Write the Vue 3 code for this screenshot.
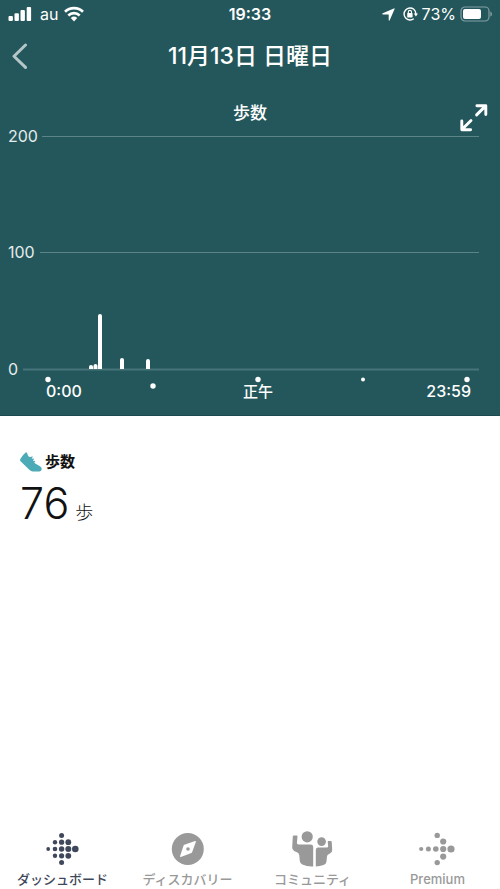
<script setup>
import { ref } from 'vue'

const gridLines = [
  { label: '200', y: 12, start: 42 },
  { label: '100', y: 128, start: 40 },
  { label: '0', y: 245, start: 23 }
]
const bars = [
  { x: 91, height: 4 },
  { x: 95.5, height: 5 },
  { x: 100, height: 55 },
  { x: 122, height: 11 },
  { x: 148, height: 10 }
]
const ticks = [
  { x: 48, y: 255.5, r: 2.7 },
  { x: 153, y: 262, r: 2.7 },
  { x: 258, y: 255.5, r: 2.7 },
  { x: 363, y: 255.5, r: 2 },
  { x: 467, y: 255.5, r: 2.7 }
]
const dashboardDots = [
  [2.2, 17, 1.9],
  [9, 10.2, 2.2], [9, 17, 2.3], [9, 23.8, 2.2],
  [15.6, 3.5, 2.5], [15.6, 10.2, 2.6], [15.6, 17, 2.7], [15.6, 23.8, 2.6], [15.6, 30.5, 2.5],
  [22.3, 10.2, 2.9], [22.3, 17, 3], [22.3, 23.8, 2.9],
  [29.3, 17, 3.3]
]
const premiumDots = [
  [4.2, 17, 2.1], [11.4, 17, 2.5], [18.8, 17, 2.8], [26.2, 17, 3.1], [34, 17, 3.6],
  [20.2, 3.4, 2.7], [26.2, 9.5, 3.1], [26.2, 24.6, 3.1], [20.2, 30.6, 2.7]
]
const tabs = [
  { id: 'dashboard', label: 'ダッシュボード' },
  { id: 'discover', label: 'ディスカバリー' },
  { id: 'community', label: 'コミュニティ' },
  { id: 'premium', label: 'Premium' }
]
const active = ref('dashboard')

const barPath = (b) => `M${b.x - 2} 245V${247 - b.height}a2 2 0 0 1 4 0V245Z`
</script>

<template>
  <div class="screen">
    <header class="top">
      <div class="status">
        <div class="status-side">
          <svg class="signal" width="24" height="16" viewBox="0 0 24 16" fill="#fff" aria-hidden="true">
            <rect x="0.5" y="10" width="4.4" height="5" rx="1" />
            <rect x="6.5" y="7.3" width="4.4" height="7.7" rx="1" />
            <rect x="12.5" y="4" width="4.4" height="11" rx="1" />
            <rect x="18.7" y="1" width="4.4" height="14" rx="1" />
          </svg>
          <span>au</span>
          <svg class="wifi" width="20" height="16" viewBox="0 0 20 16" fill="none" stroke="#fff" stroke-width="2.7" aria-hidden="true">
            <path d="M1 5.8A13 13 0 0 1 19 5.8" />
            <path d="M4.3 9.4A8.3 8.3 0 0 1 15.7 9.4" />
            <path d="M6.8 12A4.8 4.8 0 0 1 13.2 12L10 15.4Z" fill="#fff" stroke="none" />
          </svg>
        </div>
        <span class="clock">19:33</span>
        <div class="status-side end">
          <svg class="location" width="13" height="13" viewBox="0 0 13 13" fill="#fff" aria-hidden="true">
            <path d="M11.8.4Q12.9 0 12.6 1.1L7.7 12.3Q7 13.4 6.7 12V6.8Q6.7 6.4 6.3 6.4H1Q-.5 6.1.8 5.3Z" />
          </svg>
          <svg width="15" height="14" viewBox="0 0 15 14" fill="none" stroke="#fff" stroke-width="1.4" aria-hidden="true">
            <path d="M10.8 2.3A6 6 0 1 0 10.8 11.7M10.8 2.3Q12.8 4 12.9 7" />
            <path d="M10.8 6.6H15L12.9 9.6Z" fill="#fff" stroke="none" />
            <rect x="4.2" y="6.1" width="5.4" height="4.3" rx=".6" fill="#fff" stroke="none" />
            <path d="M5.3 6.6V5a1.6 1.6 0 0 1 3.2 0V6.6" stroke-width="1.1" />
          </svg>
          <span>73%</span>
          <svg width="32" height="16" viewBox="0 0 32 16" aria-hidden="true">
            <rect x="1" y="1" width="28" height="14" rx="4" fill="none" stroke="#84a0a3" stroke-width="1.2" />
            <rect x="3" y="3" width="18" height="10" rx="2" fill="#fff" />
            <path d="M30.4 5.4Q32 6 32 8T30.4 10.6Z" fill="#84a0a3" />
          </svg>
        </div>
      </div>

      <div class="title-row">
        <button class="back" type="button" aria-label="戻る">
          <svg width="16" height="28" viewBox="0 0 16 28" fill="none" stroke="#b4c6c8" stroke-width="3" stroke-linecap="round" stroke-linejoin="round">
            <path d="M13.5 3L2 14.2L13.5 25.4" />
          </svg>
        </button>
        <h1>11月13日 日曜日</h1>
      </div>

      <section class="chart">
        <h2>歩数</h2>
        <button class="expand" type="button" aria-label="拡大">
          <svg width="28" height="28" viewBox="0 0 28 28" fill="none" stroke="#fff" stroke-width="2.9" stroke-linecap="round" stroke-linejoin="round">
            <path d="M16.6 10.9L25.4 2.1M16.9 1.7H25.8V10.6M11 16.5L2.2 25.3M1.8 16.9V25.7H10.6" />
          </svg>
        </button>
        <svg class="plot" viewBox="0 0 500 291" role="img" aria-label="歩数">
          <g v-for="line in gridLines" :key="line.label">
            <path class="grid" :class="{ base: line.label === '0' }" :d="`M${line.start} ${line.y + 0.5}H479`" />
            <text class="value" x="8" :y="line.y + 6">{{ line.label }}</text>
          </g>
          <path v-for="bar in bars" :key="bar.x" :d="barPath(bar)" fill="#fff" />
          <circle v-for="tick in ticks" :key="tick.x" :cx="tick.x" :cy="tick.y" :r="tick.r" fill="#fff" />
          <text class="time" x="46" y="273">0:00</text>
          <text class="time noon" x="258" y="273" text-anchor="middle">正午</text>
          <text class="time" x="471" y="273" text-anchor="end">23:59</text>
        </svg>
      </section>
    </header>

    <main class="summary">
      <h3>
        <svg width="22" height="20" viewBox="0 0 22 20" aria-hidden="true">
          <path d="M5.7.6Q6.4 0 7 .9L8 3.5Q8.8 5 10.3 5L12.2 4.4Q13 4.3 12.9 5L11.8 6Q11.6 6.6 12.5 6.8L13.8 6.6Q14.5 6.8 13.8 7.5L13 8.1Q13 8.8 13.8 9L15 8.8Q15.7 9 15 9.6L14.4 10.3Q14.4 11 15.2 11.5L20 14.3Q22 15.5 21.7 17.3Q21.5 19.3 19.5 19.4H12.8Q10.9 19.4 9.6 18L.8 9.4Q-.4 8.2.5 6.8Q2.6 3 5.7.6Z" fill="#4dabb7" />
        </svg>
        <span>歩数</span>
      </h3>
      <p class="total"><span class="number">76</span><span class="unit">歩</span></p>
    </main>

    <nav class="tabs">
      <button v-for="tab in tabs" :key="tab.id" type="button" class="tab" :class="{ active: active === tab.id }" @click="active = tab.id">
        <svg v-if="tab.id === 'dashboard'" width="34" height="38" viewBox="0 -1 34 38" fill="currentColor" aria-hidden="true">
          <circle v-for="(d, i) in dashboardDots" :key="i" :cx="d[0]" :cy="d[1]" :r="d[2]" />
        </svg>
        <svg v-else-if="tab.id === 'discover'" width="34" height="38" viewBox="0 -1 34 38" fill="currentColor" aria-hidden="true">
          <path fill-rule="evenodd" d="M16.8 1a16 16 0 1 0 0 32a16 16 0 1 0 0-32ZM24.1 8.9Q25.1 8.8 24.9 9.8L21.1 20.3Q20.9 20.9 20.3 21.1L9.9 25Q8.8 25.2 9.1 24.1L12.6 13.6Q12.8 13 13.4 12.8ZM17 15.2a1.8 1.8 0 1 0 0 3.6a1.8 1.8 0 1 0 0-3.6Z" />
        </svg>
        <svg v-else-if="tab.id === 'community'" width="42" height="38" viewBox="1 1 42 38" fill="currentColor" aria-hidden="true">
          <circle cx="16.2" cy="6.8" r="5.6" />
          <circle cx="30.6" cy="11.6" r="4.3" />
          <path d="M2.7 5.5H5.8Q6.6 5.5 6.5 6.4L5.9 13.1Q5.9 14.5 7.4 14.5H19.6Q22.2 14.6 22.2 17.2V36.5Q16 36.8 11.3 34.5Q9 33.3 8.8 31L8.3 25.2Q8 23.4 6.4 22.6L3.1 21Q1 19.8 1.2 17.2L1.8 6.4Q1.9 5.5 2.7 5.5Z" />
          <path d="M24.8 20Q24.9 17.6 27.2 17.6H35.8Q37.2 17.6 37.2 16.2L36.7 11.8Q36.7 10.9 37.5 10.9H39.9Q40.6 10.9 40.7 11.8L41.2 20Q41.2 22.2 39.6 23.1L36.9 24.7Q36.1 25.2 36 26.5L35.4 32.1Q35.1 34.2 32.6 35.1Q28.9 36.5 24.8 36.5Z" />
        </svg>
        <svg v-else width="42" height="38" viewBox="0 -1 42 38" fill="currentColor" aria-hidden="true">
          <circle v-for="(d, i) in premiumDots" :key="i" :cx="d[0]" :cy="d[1]" :r="d[2]" />
        </svg>
        <span>{{ tab.label }}</span>
      </button>
    </nav>
  </div>
</template>

<style>
body {
  background: #fff;
}
</style>

<style scoped>
.screen {
  display: flex;
  flex-direction: column;
  min-height: 100vh;
  font-family: Inter, "Noto Sans CJK JP", sans-serif;
  color: #111;
}

h1, h2, h3, p {
  margin: 0;
}

button {
  border: 0;
  padding: 0;
  background: none;
  font: inherit;
  cursor: pointer;
}

svg {
  display: block;
  flex: none;
}

.top {
  background: #24575b;
  border-bottom: 1px solid #1c4a4e;
  color: #fff;
}

.status {
  display: grid;
  grid-template-columns: 1fr auto 1fr;
  align-items: center;
  height: 28px;
  padding: 0 8px;
  font-size: 16px;
}

.status-side {
  display: flex;
  align-items: center;
  gap: 8px;
}

.wifi {
  margin-left: -2px;
}

.end {
  justify-content: flex-end;
  gap: 4px;
}

.location {
  margin-right: 4px;
}

.clock {
  font-weight: 600;
}

.title-row {
  display: grid;
  grid-template-columns: 48px 1fr 48px;
  align-items: center;
  height: 56px;
}

.back {
  padding-left: 12px;
}

h1 {
  font-size: 23px;
  font-weight: 500;
  line-height: 32px;
  text-align: center;
}

.chart {
  position: relative;
  padding-top: 18px;
}

h2 {
  font-size: 17px;
  font-weight: 500;
  line-height: 22px;
  text-align: center;
}

.expand {
  position: absolute;
  top: 20px;
  right: 12px;
}

.plot {
  width: 100%;
}

.grid {
  stroke: #5c8486;
  stroke-width: 1;
}

.base {
  stroke: #46757a;
  stroke-width: 2;
}

.value {
  fill: #e4ecec;
  font-size: 16px;
}

.time {
  fill: #fff;
  font-size: 16px;
  font-weight: 500;
}

.noon {
  font-size: 15px;
}

.summary {
  flex: 1;
  padding: 34px 20px;
}

h3 {
  display: flex;
  align-items: center;
  gap: 3px;
  font-size: 15px;
  font-weight: 700;
  line-height: 24px;
}

.total {
  display: flex;
  align-items: baseline;
  gap: 6px;
  line-height: 58px;
}

.number {
  font-size: 43px;
  font-weight: 300;
}

.unit {
  font-size: 18px;
  font-weight: 300;
}

.tabs {
  display: grid;
  grid-template-columns: repeat(4, 1fr);
}

.tab {
  display: flex;
  flex-direction: column;
  align-items: center;
  color: #999;
  font-size: 13px;
  font-weight: 500;
  line-height: 20px;
}

.active {
  color: #3f485b;
}
</style>
